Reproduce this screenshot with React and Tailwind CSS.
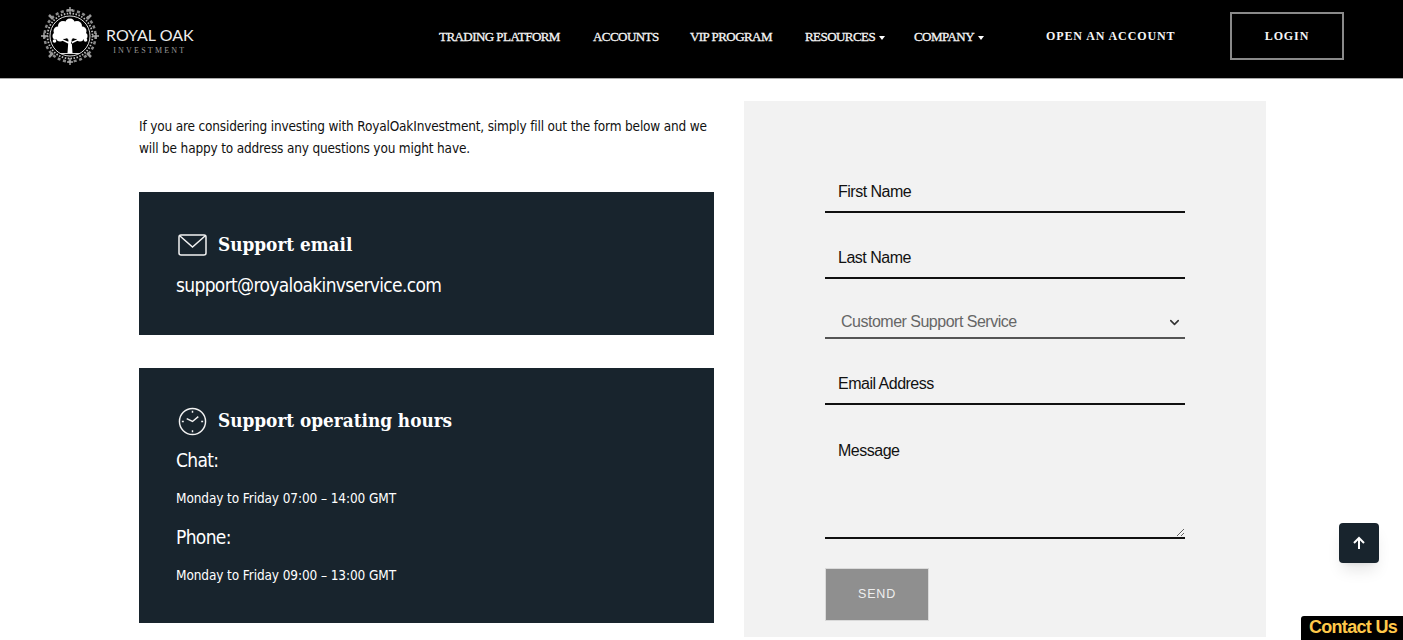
import { ChevronDown } from 'lucide-react';

const NAV_LINKS = [
    { label: 'TRADING PLATFORM', width: 'w-[154px]' },
    { label: 'ACCOUNTS', width: 'w-[97px]' },
    { label: 'VIP PROGRAM', width: 'w-[115px]' },
];

const SERIF = "font-['Liberation_Serif',serif]";
const HEADING = "font-['DejaVu_Serif_Condensed','DejaVu_Serif',serif] [font-stretch:condensed]";
const BODY = "font-['DejaVu_Sans_Condensed','DejaVu_Sans',sans-serif] [font-stretch:condensed]";
const FORM = "font-['Liberation_Sans',sans-serif]";

// tree canopy drawn as overlapping blobs
const CANOPY = [
    [29, 17.500, 5], [22, 20, 5], [36, 20, 5], [17, 25, 4.500], [41, 25, 4.500], [15, 30, 3.500],
    [43, 30, 3.500], [23, 27, 6], [35, 27, 6], [29, 25, 7], [19, 32, 3.500], [39, 32, 3.500],
    [13.500, 35, 1.800], [44.500, 34, 1.800], [29, 31, 3],
];

function Logo() {
    return (
        <div className="flex items-center mb-[6px] ml-[1px]">
            <svg width="58" height="60" viewBox="0 0 58 60" className="shrink-0">
                <circle cx="29" cy="30" r="20" fill="none" stroke="#ddd" strokeWidth="1" />
                <circle cx="29" cy="30" r="22.500" fill="none" stroke="#bbb" strokeWidth="1.800" strokeDasharray="1.500 1.500" />
                <circle cx="29" cy="30" r="25.500" fill="none" stroke="#8a8a8a" strokeWidth="2.500" strokeDasharray="3 2.500" />
                <path d="M29 1v7M29 52v7M0 30h7M51 30h7M26 4h6M26 56h6M3 27v6M55 27v6" stroke="#aaa" strokeWidth="1.400" />
                <path d="M8 9l4 4M50 9l-4 4M8 51l4-4M50 51l-4-4" stroke="#999" strokeWidth="2.500" />
                {CANOPY.map(([cx, cy, r]) => (
                    <circle key={`${cx}-${cy}`} cx={cx} cy={cy} r={r} fill="#fff" />
                ))}
                <path fill="#fff" d="M27.500 33h3l1 14h-5zM28 38l-8-4 1-1 7 3zM30 38l8-4-1-1-7 3z" />
                <path d="M20 47.500h18" stroke="#ddd" strokeWidth="1" />
            </svg>
            <div className="ml-[7px] mt-[9px] flex flex-col items-center">
                <span className="font-['Lato',sans-serif] text-[16px] leading-[20px] text-[#eee]">ROYAL OAK</span>
                <span className={`${SERIF} mt-[1px] text-[8px] leading-[10px] tracking-[2.200px] text-[#999]`}>INVESTMENT</span>
            </div>
        </div>
    );
}

function Caret() {
    return <span className="ml-[4px] inline-block align-middle border-x-[3.500px] border-t-[4px] border-x-transparent border-t-white"></span>;
}

function Header() {
    return (
        <header className="h-[79px] bg-black border-b border-[#aaa] flex items-center pl-[40px]">
            <div className="w-[399px] shrink-0">
                <Logo />
            </div>
            <nav className={`${SERIF} flex items-center shrink-0 text-[13px] tracking-[-0.550px] [-webkit-text-stroke:0.3px_#f5f5f5] text-[#f5f5f5] mb-[5px]`}>
                {NAV_LINKS.map((link) => (
                    <a key={link.label} className={`${link.width} shrink-0 whitespace-nowrap`}>{link.label}</a>
                ))}
                <a className="w-[109px] shrink-0 whitespace-nowrap">RESOURCES<Caret /></a>
                <a className="w-[132px] shrink-0 whitespace-nowrap">COMPANY<Caret /></a>
            </nav>
            <a className={`${SERIF} w-[184px] shrink-0 whitespace-nowrap text-[12px] font-bold tracking-[0.900px] text-[#f5f5f5] mb-[6px]`}>OPEN AN ACCOUNT</a>
            <a className={`${SERIF} w-[114px] h-[48px] shrink-0 mb-[6px] border-2 border-[#8a8a8a] flex items-center justify-center text-[12px] font-bold tracking-[0.900px] text-[#f5f5f5]`}>LOGIN</a>
        </header>
    );
}

function MailIcon() {
    return (
        <svg width="29" height="22" viewBox="0 0 29 22" fill="none" stroke="#f2f2f2" strokeWidth="1.500" className="ml-[2px] shrink-0">
            <rect x="1" y="1" width="27" height="20" rx="2" />
            <path d="M2 2l12.500 11L27 2" />
        </svg>
    );
}

function ClockIcon() {
    return (
        <svg width="29" height="29" viewBox="0 0 30 30" fill="none" stroke="#f2f2f2" strokeWidth="1.500" className="ml-[2px] shrink-0">
            <circle cx="15" cy="15" r="13.500" />
            <path d="M9 12l6 3 6-5" />
            <path d="M15 4v2M15 24v2M4 15h2M24 15h2" />
        </svg>
    );
}

function InfoCard({ className, icon, title, children }) {
    return (
        <div className={`bg-[#18242d] text-white pl-[37px] ${className}`}>
            <div className="flex items-center gap-[11px]">
                {icon}
                <h3 className={`${HEADING} text-[18.800px] font-bold leading-[30px] -translate-y-px`}>{title}</h3>
            </div>
            {children}
        </div>
    );
}

function ContactForm() {
    const inputClass = `${FORM} block w-full h-[44px] bg-transparent border-b-2 border-[#111] pl-[13px] pt-[4px] text-[16px] tracking-[-0.500px] text-[#111] placeholder:text-[#111] outline-none`;

    return (
        <form className="w-[522px] h-[536px] shrink-0 bg-[#f2f2f2] pt-[68px] px-[81px]">
            <input className={inputClass} placeholder="First Name" />
            <input className={`${inputClass} mt-[22px]`} placeholder="Last Name" />
            <div className="relative mt-[22px]">
                <select className={`${FORM} block w-full h-[38px] appearance-none bg-transparent border-b-2 border-[#555] pl-[16px] pt-[5px] text-[16px] tracking-[-0.500px] text-[#666] outline-none`}>
                    <option>Customer Support Service</option>
                </select>
                <ChevronDown size={15} strokeWidth={2.500} className="absolute right-[3px] top-[14px] text-[#333]" />
            </div>
            <input className={`${inputClass} mt-[22px]`} placeholder="Email Address" />
            <textarea className={`${FORM} block w-full h-[112px] mt-[22px] bg-transparent border-b-2 border-[#111] pl-[13px] pt-[12px] text-[16px] tracking-[-0.500px] text-[#111] placeholder:text-[#111] outline-none`} placeholder="Message"></textarea>
            <button type="button" className={`${FORM} block mt-[29px] w-[104px] h-[53px] bg-[#8f8f8f] border border-[#dadada] text-[12.500px] tracking-[0.800px] text-[#eee]`}>SEND</button>
        </form>
    );
}

export default function App() {
    return (
        <div className="bg-white">
            <Header />
            <main className="flex gap-[30px] pl-[139px] pt-[22px]">
                <div className={`${BODY} w-[575px] shrink-0`}>
                    <p className="pt-[14px] text-[13.500px] tracking-[-0.170px] leading-[22px] text-[#111]">
                        If you are considering investing with RoyalOakInvestment, simply fill out the form below and we will be happy to address any questions you might have.
                    </p>
                    <InfoCard className="mt-[33px] h-[143px] pt-[38px]" icon={<MailIcon />} title="Support email">
                        <p className="mt-[12px] text-[19px] tracking-[-0.650px] leading-[26px]">support@royaloakinvservice.com</p>
                    </InfoCard>
                    <InfoCard className="mt-[33px] h-[255px] pt-[38px]" icon={<ClockIcon />} title="Support operating hours">
                        <p className="mt-[11px] text-[19px] tracking-[-0.650px] leading-[26px]">Chat:</p>
                        <p className="mt-[14px] text-[13.500px] tracking-[-0.100px] leading-[22px]">Monday to Friday 07:00 – 14:00 GMT</p>
                        <p className="mt-[15px] text-[19px] tracking-[-0.650px] leading-[26px]">Phone:</p>
                        <p className="mt-[14px] text-[13.500px] tracking-[-0.100px] leading-[22px]">Monday to Friday 09:00 – 13:00 GMT</p>
                    </InfoCard>
                </div>
                <ContactForm />
            </main>
            <button type="button" className="fixed left-[1339px] top-[523px] w-[40px] h-[40px] rounded-[4px] bg-[#18242d] shadow-lg flex items-center justify-center">
                <svg width="14" height="14" viewBox="0 0 14 14" fill="none" stroke="#fff" strokeWidth="2"><path d="M7 13V2M2 7l5-5 5 5" /></svg>
            </button>
            <div className={`${FORM} fixed right-0 bottom-0 w-[102px] h-[24px] rounded-tl-[3px] bg-black pl-[2px] text-center text-[18px] tracking-[-0.700px] font-bold leading-[23px] text-[#ffc84a]`}>Contact Us</div>
        </div>
    );
}
